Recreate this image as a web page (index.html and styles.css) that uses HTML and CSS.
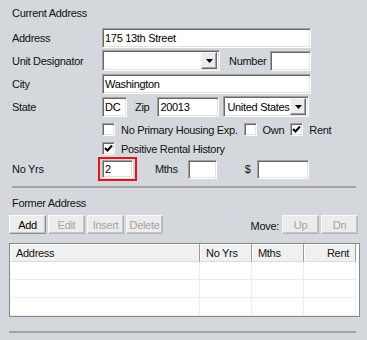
FILE: index.html
```html
<!DOCTYPE html>
<html lang="en">

<head>
    <meta charset="UTF-8">
    <title>Address</title>
    <link rel="stylesheet" href="styles.css">
</head>

<body>
    <div class="panel">
        <div class="title">Current Address</div>

        <div class="row">
            <label class="lbl">Address</label>
            <input class="box w-long" type="text" value="175 13th Street">
        </div>

        <div class="row">
            <label class="lbl">Unit Designator</label>
            <div class="combo w-unit">
                <span class="combo-text"></span>
                <span class="drop"><svg width="7" height="4" viewBox="0 0 7 4"><path d="M0 0h7L3.5 4z" fill="#000"/></svg></span>
            </div>
            <label class="lbl-in num-lbl">Number</label>
            <input class="box w-num" type="text" value="">
        </div>

        <div class="row">
            <label class="lbl">City</label>
            <input class="box w-long" type="text" value="Washington">
        </div>

        <div class="row">
            <label class="lbl">State</label>
            <input class="box w-state" type="text" value="DC">
            <label class="lbl-in zip-lbl">Zip</label>
            <input class="box w-zip" type="text" value="20013">
            <div class="combo w-country">
                <span class="combo-text">United States</span>
                <span class="drop"><svg width="7" height="4" viewBox="0 0 7 4"><path d="M0 0h7L3.5 4z" fill="#000"/></svg></span>
            </div>
        </div>

        <div class="checkrow first">
            <span class="check"></span>
            <span class="check-lbl">No Primary Housing Exp.</span>
            <span class="check"></span>
            <span class="check-lbl">Own</span>
            <span class="check"><svg width="9" height="9" viewBox="0 0 9 9"><path d="M1 4l2.5 2.5L8 1.5" fill="none" stroke="#000" stroke-width="2"/></svg></span>
            <span class="check-lbl">Rent</span>
        </div>

        <div class="checkrow">
            <span class="check"><svg width="9" height="9" viewBox="0 0 9 9"><path d="M1 4l2.5 2.5L8 1.5" fill="none" stroke="#000" stroke-width="2"/></svg></span>
            <span class="check-lbl">Positive Rental History</span>
        </div>

        <div class="row yrs-row">
            <label class="lbl yrs-lbl">No Yrs</label>
            <div class="error">
                <input class="box w-yrs" type="text" value="2">
            </div>
            <label class="lbl-in mths-lbl">Mths</label>
            <input class="box w-mths" type="text" value="">
            <label class="lbl-in dollar-lbl">$</label>
            <input class="box w-rent" type="text" value="">
        </div>

        <hr class="sep">

        <div class="title former">Former Address</div>

        <div class="toolbar">
            <button class="btn">Add</button>
            <button class="btn" disabled>Edit</button>
            <button class="btn" disabled>Insert</button>
            <button class="btn" disabled>Delete</button>
            <span class="move">Move:</span>
            <button class="btn" disabled>Up</button>
            <button class="btn" disabled>Dn</button>
        </div>

        <div class="grid">
            <div class="grid-head">
                <div class="c-addr">Address</div>
                <div class="c-yrs">No Yrs</div>
                <div class="c-mths">Mths</div>
                <div class="c-rent">Rent</div>
            </div>
            <div class="grid-row">
                <div class="c-addr"></div>
                <div class="c-yrs"></div>
                <div class="c-mths"></div>
                <div class="c-rent"></div>
            </div>
            <div class="grid-row">
                <div class="c-addr"></div>
                <div class="c-yrs"></div>
                <div class="c-mths"></div>
                <div class="c-rent"></div>
            </div>
            <div class="grid-row">
                <div class="c-addr"></div>
                <div class="c-yrs"></div>
                <div class="c-mths"></div>
                <div class="c-rent"></div>
            </div>
        </div>

        <hr class="sep bottom">
    </div>
</body>

</html>
```

FILE: styles.css
```css
body {
    margin: 0;
    width: 367px;
    height: 340px;
    overflow: hidden;
    background-color: #d4d8dc;
    font-family: "Liberation Sans", Arial, sans-serif;
    font-size: 11px;
    letter-spacing: -0.3px;
    color: #111;
}

.panel {
    padding: 0 9px;
}

.title {
    height: 26px;
    line-height: 26px;
    padding-left: 3px;
}

.row {
    display: flex;
    align-items: center;
    height: 23px;
    padding-left: 3px;
}

.lbl {
    width: 90px;
    flex: none;
}

.lbl-in {
    flex: none;
}

/* sunken text box */
.box {
    box-sizing: border-box;
    height: 20px;
    margin: 0;
    padding: 0 2px;
    border: 1px solid;
    border-color: #a0a0a0 #fff #fff #a0a0a0;
    box-shadow: inset 1px 1px 0 #696969, inset -1px -1px 0 #e3e3e3;
    background-color: #fff;
    font: inherit;
    letter-spacing: inherit;
    color: #000;
    outline: none;
    flex: none;
}

.w-long { width: 209px; }
.w-num { width: 41px; }
.w-state { width: 25px; }
.w-zip { width: 62px; }
.w-yrs { width: 31px; height: 18px; }
.w-mths { width: 29px; height: 19px; }
.w-rent { width: 52px; height: 19px; }

.num-lbl { margin: 0 4px 0 9px; }
.zip-lbl { margin: 0 8px 0 8px; }

.combo {
    box-sizing: border-box;
    height: 21px;
    display: flex;
    align-items: center;
    border: 1px solid;
    border-color: #a0a0a0 #fff #fff #a0a0a0;
    box-shadow: inset 1px 1px 0 #696969, inset -1px -1px 0 #e3e3e3;
    background-color: #fff;
    padding: 2px;
    flex: none;
}

.w-unit { width: 118px; }
.w-country { width: 86px; margin-left: 4px; }

.combo-text {
    flex: 1;
    padding-left: 1px;
    color: #000;
}

.drop {
    box-sizing: border-box;
    width: 16px;
    height: 17px;
    display: flex;
    align-items: center;
    justify-content: center;
    background-color: #ececec;
    border: 1px solid;
    border-color: #f8f8f8 #696969 #696969 #f8f8f8;
    box-shadow: inset -1px -1px 0 #a0a0a0;
}

.checkrow {
    display: flex;
    align-items: center;
    height: 19px;
    padding-left: 93px;
}

.checkrow.first {
    margin-top: 2px;
}

.check {
    box-sizing: border-box;
    width: 13px;
    height: 13px;
    flex: none;
    display: flex;
    align-items: center;
    justify-content: center;
    border: 1px solid;
    border-color: #a0a0a0 #fff #fff #a0a0a0;
    box-shadow: inset 1px 1px 0 #696969, inset -1px -1px 0 #e3e3e3;
    background-color: #fff;
}

.check-lbl {
    margin-left: 6px;
    margin-right: 6px;
}

.yrs-row {
    height: 22px;
}

.yrs-lbl {
    width: 86px;
}

.error {
    box-sizing: border-box;
    width: 39px;
    height: 24px;
    padding: 1px 2px;
    border: 2px solid #e3141c;
    flex: none;
}

.mths-lbl { margin: 0 10px 0 18px; }
.dollar-lbl { margin: 0 7px 0 28px; }

.sep {
    margin: 6px 0 0 3px;
    width: 344px;
    height: 2px;
    border: 0;
    background-color: #a3a3a3;
}

.title.former {
    height: 22px;
    line-height: 22px;
    margin-top: 4px;
}

.toolbar {
    display: flex;
    align-items: center;
    gap: 2px;
    margin-top: 1px;
}

.btn {
    box-sizing: border-box;
    width: 37px;
    height: 19px;
    margin: 0;
    padding: 0;
    border: 1px solid;
    border-color: #fff #8e8e8e #8e8e8e #fff;
    box-shadow: inset -1px -1px 0 #c6c6c6;
    background-color: #ececec;
    font: inherit;
    letter-spacing: inherit;
    color: #000;
}

.btn:disabled {
    color: #a3a3a3;
    border-color: #fafafa #b4b4b4 #b4b4b4 #fafafa;
}

.move {
    margin-left: auto;
    margin-right: 1px;
    padding-top: 3px;
}

.grid {
    margin-top: 9px;
    width: 349px;
    border: 1px solid #828790;
    background-color: #fff;
}

.grid-head,
.grid-row {
    display: flex;
}

.grid-head div {
    box-sizing: border-box;
    height: 18px;
    line-height: 18px;
    padding: 0 6px;
    background-color: #f0f0f0;
    border-right: 1px solid #9a9a9a;
    box-shadow: inset 1px 1px 0 #fff;
    border-bottom: 1px solid #dcdcdc;
}

.grid-row div {
    box-sizing: border-box;
    height: 18px;
    border-right: 1px solid #ececec;
    border-bottom: 1px solid #ececec;
}

.c-addr { width: 190px; }
.c-yrs { width: 52px; }
.c-mths { width: 52px; }
.c-rent { width: 52px; text-align: right; }

.grid-head .c-rent {
    padding-right: 6px;
}

.sep.bottom {
    margin: 14px 0 0 0;
    width: 347px;
}
```
